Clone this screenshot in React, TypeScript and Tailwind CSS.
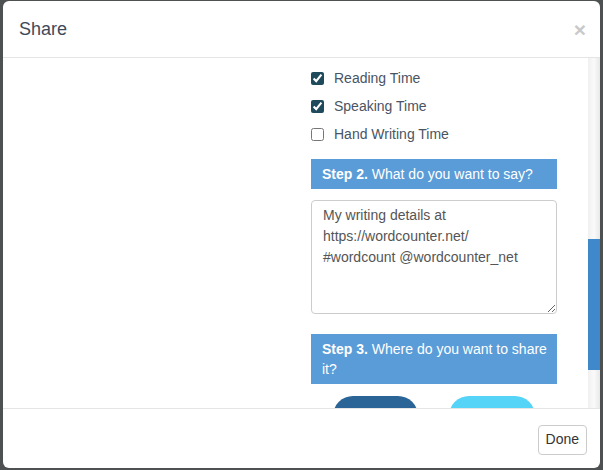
import { useState } from "react";

type Option = { label: string; checked: boolean };

const options: Option[] = [
  { label: "Reading Time", checked: true },
  { label: "Speaking Time", checked: true },
  { label: "Hand Writing Time", checked: false },
];

function StepBox({ step, lines }: { step: string; lines: string[] }) {
  return (
    <div className="bg-[#5a9cd7] py-[5px] pl-[11px] pr-[4px] text-[14px] leading-[20px] text-white">
      <div>
        <span className="font-bold">{step}</span> <span>{lines[0]}</span>
      </div>
      {lines.slice(1).map((l) => (
        <div key={l}>{l}</div>
      ))}
    </div>
  );
}

export default function App() {
  const [checked, setChecked] = useState(options.map((o) => o.checked));

  return (
    <div
      className="h-[470px] w-[603px] overflow-hidden bg-[#4d5152] pl-[3px] pt-[1px]"
      style={{ fontFamily: '"Liberation Sans", Arial, sans-serif' }}
    >
      <div className="flex h-[467px] w-[597px] flex-col overflow-hidden rounded-[6px] bg-white">
        <header className="flex h-[57px] shrink-0 items-center justify-between border-b border-[#e5e5e5] pl-[16px] pr-[14px]">
          <h1 className="text-[18px] text-[#3e4a5a]">Share</h1>
          <button className="text-[21px] font-bold leading-none text-[#c9c9c9]">×</button>
        </header>

        <div className="flex min-h-0 flex-1">
          <div className="flex-1 overflow-hidden pl-[308px] pt-[6px]">
            <div className="w-[246px]">
              {options.map((o, i) => (
                <label key={o.label} className="flex h-[28px] items-center gap-[10px] text-[14px] text-[#4a5463]">
                  <input
                    type="checkbox"
                    checked={checked[i]}
                    onChange={() => setChecked(checked.map((c, j) => (j === i ? !c : c)))}
                    className="m-0 h-[13px] w-[13px] accent-[#1f4a5c]"
                  />
                  {o.label}
                </label>
              ))}

              <div className="mt-[11px]">
                <StepBox step="Step 2." lines={["What do you want to say?"]} />
              </div>

              <textarea
                readOnly
                defaultValue={"My writing details at\nhttps://wordcounter.net/\n#wordcount @wordcounter_net"}
                className="mt-[11px] block h-[114px] w-full rounded-[4px] border border-[#cccccc] px-[11px] pt-[4px] text-[14px] leading-[21px] text-[#555555] outline-none"
              />

              <div className="mt-[20px]">
                <StepBox step="Step 3." lines={["Where do you want to share", "it?"]} />
              </div>

              <div className="mt-[12px] flex justify-center gap-[31px]">
                <div className="h-[40px] w-[85px] rounded-[20px] bg-[#2b6597]" />
                <div className="h-[40px] w-[86px] rounded-[20px] bg-[#55d4f8]" />
              </div>
            </div>
          </div>

          <div className="flex w-[12px] shrink-0 flex-col bg-gradient-to-r from-[#f0f0f0] via-[#fafafa] to-[#e8e8e8] pt-[181px] pb-[37px]">
            <div className="h-[131px] bg-[#3f89ca]" />
          </div>
        </div>

        <footer className="flex h-[60px] shrink-0 items-center justify-end border-t border-[#e5e5e5] pr-[13px] pt-[2px]">
          <button className="h-[30px] rounded-[4px] border border-[#cccccc] px-[7px] text-[14px] text-[#333333]">
            Done
          </button>
        </footer>
      </div>
    </div>
  );
}
